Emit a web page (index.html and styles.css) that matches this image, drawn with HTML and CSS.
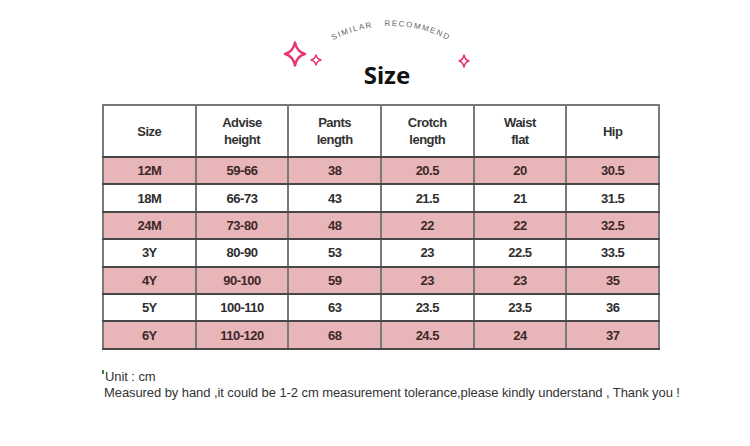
FILE: index.html
```html
<!DOCTYPE html>
<html>
<head>
<meta charset="utf-8">
<link rel="stylesheet" href="styles.css">
</head>
<body>
<div class="page">
  <header class="head">
    <svg class="deco" width="750" height="100" viewBox="0 0 750 100">
      <defs>
        <path id="arc" d="M267 150 A124 124 0 0 1 515 150"/>
      </defs>
      <text class="arc-text"><textPath href="#arc" startOffset="50%" text-anchor="middle">SIMILAR&#160;&#160;&#160;RECOMMEND</textPath></text>
      <g class="spark">
        <path class="big" d="M295 42.5 Q297 52 305 54 Q297 56 295 65.5 Q293 56 285 54 Q293 52 295 42.5Z"/>
        <path d="M316 55 Q317 59 321 60 Q317 61 316 65 Q315 61 311 60 Q315 59 316 55Z"/>
        <path d="M464 55 Q465 60 469 61 Q465 62 464 67 Q463 62 459 61 Q463 60 464 55Z"/>
      </g>
    </svg>
    <h1 class="title">Size</h1>
  </header>

  <table class="sizes">
    <thead>
      <tr>
        <th>Size</th>
        <th>Advise<br>height</th>
        <th>Pants<br>length</th>
        <th>Crotch<br>length</th>
        <th>Waist<br>flat</th>
        <th>Hip</th>
      </tr>
    </thead>
    <tbody>
      <tr class="pink"><td>12M</td><td>59-66</td><td>38</td><td>20.5</td><td>20</td><td>30.5</td></tr>
      <tr><td>18M</td><td>66-73</td><td>43</td><td>21.5</td><td>21</td><td>31.5</td></tr>
      <tr class="pink"><td>24M</td><td>73-80</td><td>48</td><td>22</td><td>22</td><td>32.5</td></tr>
      <tr><td>3Y</td><td>80-90</td><td>53</td><td>23</td><td>22.5</td><td>33.5</td></tr>
      <tr class="pink"><td>4Y</td><td>90-100</td><td>59</td><td>23</td><td>23</td><td>35</td></tr>
      <tr><td>5Y</td><td>100-110</td><td>63</td><td>23.5</td><td>23.5</td><td>36</td></tr>
      <tr class="pink"><td>6Y</td><td>110-120</td><td>68</td><td>24.5</td><td>24</td><td>37</td></tr>
    </tbody>
  </table>

  <div class="notes">
    <p class="unit"><span class="mark"></span>Unit : cm</p>
    <p>Measured by hand ,it could be 1-2 cm measurement tolerance,please kindly understand , Thank you !</p>
  </div>
</div>
</body>
</html>
```

FILE: styles.css
```css
html, body {
  margin: 0;
  padding: 0;
  background: #fff;
}

.page {
  width: 750px;
  height: 446px;
  overflow: hidden;
  font-family: "Liberation Sans", Arial, sans-serif;
  color: #333;
}

.head {
  position: relative;
  height: 89px;
}

.deco {
  position: absolute;
  left: 0;
  top: 0;
}

.arc-text {
  font-family: "Liberation Sans", Arial, sans-serif;
  font-size: 8px;
  letter-spacing: 1.5px;
  fill: #666;
}

.spark path {
  fill: none;
  stroke: #e8376f;
  stroke-width: 1.5;
  stroke-linejoin: round;
}

.spark .big {
  stroke-width: 2.4;
}

.title {
  margin: 0;
  padding: 61px 0 0 24px;
  text-align: center;
  font-family: "Noto Sans", "Open Sans", sans-serif;
  font-weight: 700;
  font-size: 24px;
  line-height: 28px;
  color: #111;
  position: relative;
}

.sizes {
  margin: 15px 0 0 102px;
  width: 558px;
  border-collapse: collapse;
  table-layout: fixed;
  font-family: "Liberation Sans", Arial, sans-serif;
  font-weight: 700;
  font-size: 13px;
  letter-spacing: -0.5px;
  text-align: center;
}

.sizes th,
.sizes td {
  border-left: 2px solid #7a7a7a;
  border-right: 2px solid #7a7a7a;
  border-top: 2px solid #474747;
  border-bottom: 2px solid #474747;
  padding: 0;
}

.sizes thead th {
  height: 50px;
  line-height: 17px;
  color: #333;
  font-weight: 700;
  border-top-color: #777;
}

.sizes tbody td {
  height: 25.4px;
  color: #2e2e2e;
}

.sizes tbody tr.pink td {
  background: #e8b6b9;
  color: #3e2828;
}

.notes {
  margin-top: 19px;
  padding-left: 104px;
  font-size: 13px;
  line-height: 16px;
  letter-spacing: -0.08px;
  color: #333;
}

.notes p {
  margin: 0;
}

.mark {
  display: inline-block;
  width: 2px;
  height: 4px;
  background: #2a8a3a;
  vertical-align: top;
  margin: 1px 1px 0 -2px;
}
```
